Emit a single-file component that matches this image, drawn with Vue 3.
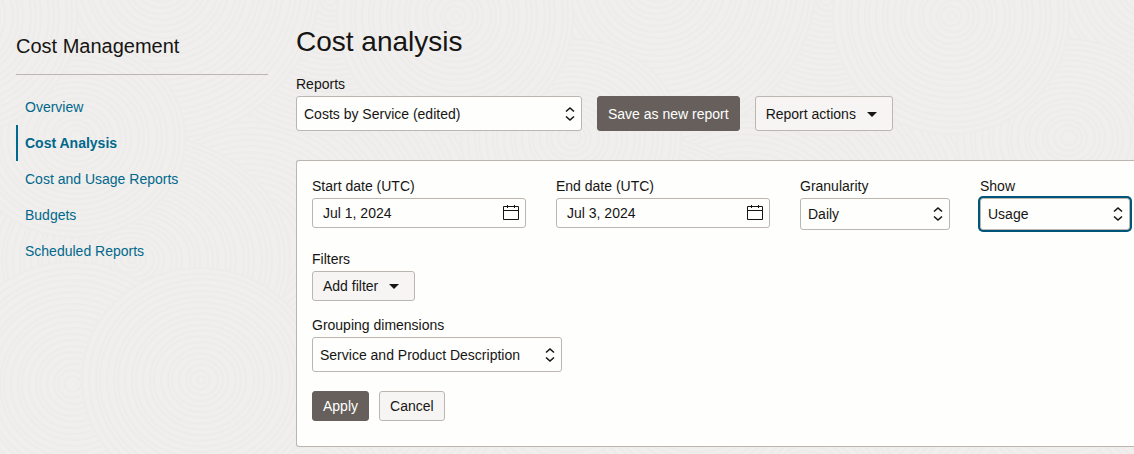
<template>
  <div class="page">
    <svg class="backdrop" aria-hidden="true">
      <defs>
        <pattern id="rings" width="496" height="496" patternUnits="userSpaceOnUse">
          <g v-for="(disc, i) in discs" :key="i">
            <ellipse
              v-for="(r, n) in ringRadii(disc.r)"
              :key="r"
              :cx="disc.x + (n % 3)"
              :cy="disc.y"
              :rx="r"
              :ry="r * disc.flat"
              class="ring"
            />
          </g>
        </pattern>
      </defs>
      <rect width="100%" height="100%" fill="url(#rings)" />
    </svg>

    <aside class="sidebar">
      <h2 class="sidebar-title">Cost Management</h2>
      <nav class="nav">
        <a
          v-for="item in navItems"
          :key="item"
          href="#"
          class="nav-link"
          :class="{ active: item === activeItem }"
          @click.prevent="activeItem = item"
        >{{ item }}</a>
      </nav>
    </aside>

    <main class="main">
      <h1 class="page-title">Cost analysis</h1>

      <div class="report-row">
        <div class="field report-field">
          <label for="report">Reports</label>
          <div class="select-box tall">
            <select id="report" v-model="report">
              <option>Costs by Service (edited)</option>
            </select>
            <svg class="chevrons" viewBox="0 0 10 16"><path d="M1 5.5 5 2 9 5.5M1 10.5 5 14 9 10.5" /></svg>
          </div>
        </div>
        <button type="button" class="btn primary tall">Save as new report</button>
        <button type="button" class="btn menu tall">
          Report actions
          <svg class="caret" viewBox="0 0 16 16"><path d="M3 6h10l-5 5z" /></svg>
        </button>
      </div>

      <form class="panel" @submit.prevent>
        <div class="filter-row">
          <div v-for="date in dates" :key="date.id" class="field date-field">
            <label :for="date.id">{{ date.label }}</label>
            <div class="date-box">
              <input :id="date.id" v-model="date.value" type="text">
              <svg class="calendar" viewBox="0 0 16 16">
                <path d="M.5 1.5h15v13H.5zM.5 5.5h15M4.5 0v3M11.5 0v3" />
              </svg>
            </div>
          </div>
          <div class="field small-field">
            <label for="granularity">Granularity</label>
            <div class="select-box">
              <select id="granularity" v-model="granularity">
                <option>Daily</option>
                <option>Monthly</option>
              </select>
              <svg class="chevrons" viewBox="0 0 10 16"><path d="M1 5.5 5 2 9 5.5M1 10.5 5 14 9 10.5" /></svg>
            </div>
          </div>
          <div class="field small-field">
            <label for="show">Show</label>
            <div class="select-box focused">
              <select id="show" v-model="show">
                <option>Cost</option>
                <option>Usage</option>
              </select>
              <svg class="chevrons" viewBox="0 0 10 16"><path d="M1 5.5 5 2 9 5.5M1 10.5 5 14 9 10.5" /></svg>
            </div>
          </div>
        </div>

        <div class="field filters">
          <label for="add-filter">Filters</label>
          <button id="add-filter" type="button" class="btn menu">
            Add filter
            <svg class="caret" viewBox="0 0 16 16"><path d="M3 6h10l-5 5z" /></svg>
          </button>
        </div>

        <div class="field grouping">
          <label for="grouping">Grouping dimensions</label>
          <div class="select-box tall">
            <select id="grouping" v-model="grouping">
              <option>Service and Product Description</option>
            </select>
            <svg class="chevrons" viewBox="0 0 10 16"><path d="M1 5.5 5 2 9 5.5M1 10.5 5 14 9 10.5" /></svg>
          </div>
        </div>

        <div class="actions">
          <button type="submit" class="btn primary">Apply</button>
          <button type="button" class="btn">Cancel</button>
        </div>
      </form>
    </main>
  </div>
</template>

<script setup>
import { ref } from 'vue'

const navItems = [
  'Overview',
  'Cost Analysis',
  'Cost and Usage Reports',
  'Budgets',
  'Scheduled Reports'
]
const activeItem = ref('Cost Analysis')

const report = ref('Costs by Service (edited)')
const granularity = ref('Daily')
const show = ref('Usage')
const grouping = ref('Service and Product Description')
const dates = ref([
  { id: 'start-date', label: 'Start date (UTC)', value: 'Jul 1, 2024' },
  { id: 'end-date', label: 'End date (UTC)', value: 'Jul 3, 2024' }
])

// later discs cover the earlier ones
const discs = [
  { x: 248, y: 248, r: 420, flat: 1 },
  { x: 330, y: 0, r: 150, flat: 0.9 },
  { x: 160, y: -20, r: 160, flat: 1 },
  { x: 10, y: 290, r: 150, flat: 0.9 },
  { x: 506, y: 290, r: 150, flat: 0.9 },
  { x: 130, y: 260, r: 160, flat: 0.8 },
  { x: 75, y: 138, r: 110, flat: 0.9 },
  { x: 571, y: 138, r: 110, flat: 0.9 },
  { x: 455, y: 16, r: 118, flat: 1 },
  { x: -41, y: 16, r: 118, flat: 1 },
  { x: 310, y: 480, r: 90, flat: 0.8 },
  { x: 72, y: 384, r: 122, flat: 1 },
  { x: 200, y: 380, r: 118, flat: 0.95 }
]

const ringRadii = (max) => {
  const radii = []
  for (let r = max; r > 3; r -= 6) radii.push(r)
  return radii
}
</script>

<style>
body {
  margin: 0;
  background: #f0efed;
}
</style>

<style scoped>
.page {
  position: relative;
  display: flex;
  gap: 28px;
  min-height: 100vh;
  box-sizing: border-box;
  padding: 24px 0 7px 16px;
  overflow: hidden;
  font-family: "Liberation Sans", Arial, sans-serif;
  font-size: 14px;
  line-height: 20px;
  color: #161513;
}

.backdrop {
  position: absolute;
  inset: 0;
  width: 100%;
  height: 100%;
}

.ring {
  fill: #f0efed;
  stroke: #edecea;
  stroke-width: 2;
}

.sidebar {
  position: relative;
  flex: 0 0 252px;
}

.sidebar-title {
  margin: 0;
  padding: 10px 0 16px;
  border-bottom: 1px solid #bcb6b1;
  font-size: 20px;
  font-weight: 400;
  line-height: 24px;
}

.nav {
  display: flex;
  flex-direction: column;
  padding-top: 14px;
}

.nav-link {
  padding: 8px 7px;
  border-left: 2px solid transparent;
  color: #00688c;
  text-decoration: none;
}

.nav-link.active {
  border-left-color: #00688c;
  font-weight: 700;
}

.main {
  position: relative;
  flex: 1;
  min-width: 0;
}

.page-title {
  margin: 0 0 14px;
  font-size: 28px;
  font-weight: 400;
  line-height: 36px;
}

.report-row {
  display: flex;
  align-items: flex-end;
  gap: 15px;
}

.field {
  display: flex;
  flex-direction: column;
  align-items: flex-start;
  gap: 2px;
}

.report-field {
  width: 286px;
}

.select-box,
.date-box {
  position: relative;
  width: 100%;
  height: 32px;
}

.date-box {
  height: 30px;
}

select,
input {
  appearance: none;
  width: 100%;
  height: 100%;
  box-sizing: border-box;
  margin: 0;
  padding: 0 24px 0 7px;
  border: 1px solid #bcb6b1;
  border-radius: 3px;
  background: #fefefc;
  color: inherit;
  font: inherit;
  outline: none;
}

input {
  padding: 0 32px 0 10px;
}

.focused select {
  box-shadow: 0 0 0 2px #00567a;
}

.select-box.tall,
.btn.tall {
  height: 35px;
}

.chevrons,
.calendar {
  position: absolute;
  top: 0;
  right: 7px;
  bottom: 0;
  height: 16px;
  margin: auto 0;
  fill: none;
  stroke: #161513;
  pointer-events: none;
}

.chevrons {
  width: 10px;
  stroke-width: 1.6;
}

.calendar {
  width: 16px;
}

.btn {
  display: inline-flex;
  align-items: center;
  height: 30px;
  box-sizing: border-box;
  margin: 0;
  padding: 0 10px;
  border: 1px solid #bcb6b1;
  border-radius: 3px;
  background: #f7f5f4;
  color: inherit;
  font: inherit;
  white-space: nowrap;
  cursor: pointer;
}

.btn.primary {
  border-color: #665f5b;
  background: #665f5b;
  color: #fff;
}

.btn.menu {
  gap: 8px;
  padding-right: 12px;
}

.caret {
  width: 16px;
  height: 16px;
  fill: #161513;
}

.panel {
  margin-top: 29px;
  padding: 15px 0 25px 15px;
  border: 1px solid #bcb6b1;
  border-right: none;
  border-radius: 3px 0 0 3px;
  background: #fefefc;
}

.filter-row {
  display: flex;
  gap: 30px;
}

.date-field {
  width: 214px;
}

.small-field {
  width: 150px;
}

.filters {
  margin-top: 19px;
}

.grouping {
  width: 250px;
  margin-top: 14px;
}

.actions {
  display: flex;
  gap: 10px;
  margin-top: 19px;
}
</style>
